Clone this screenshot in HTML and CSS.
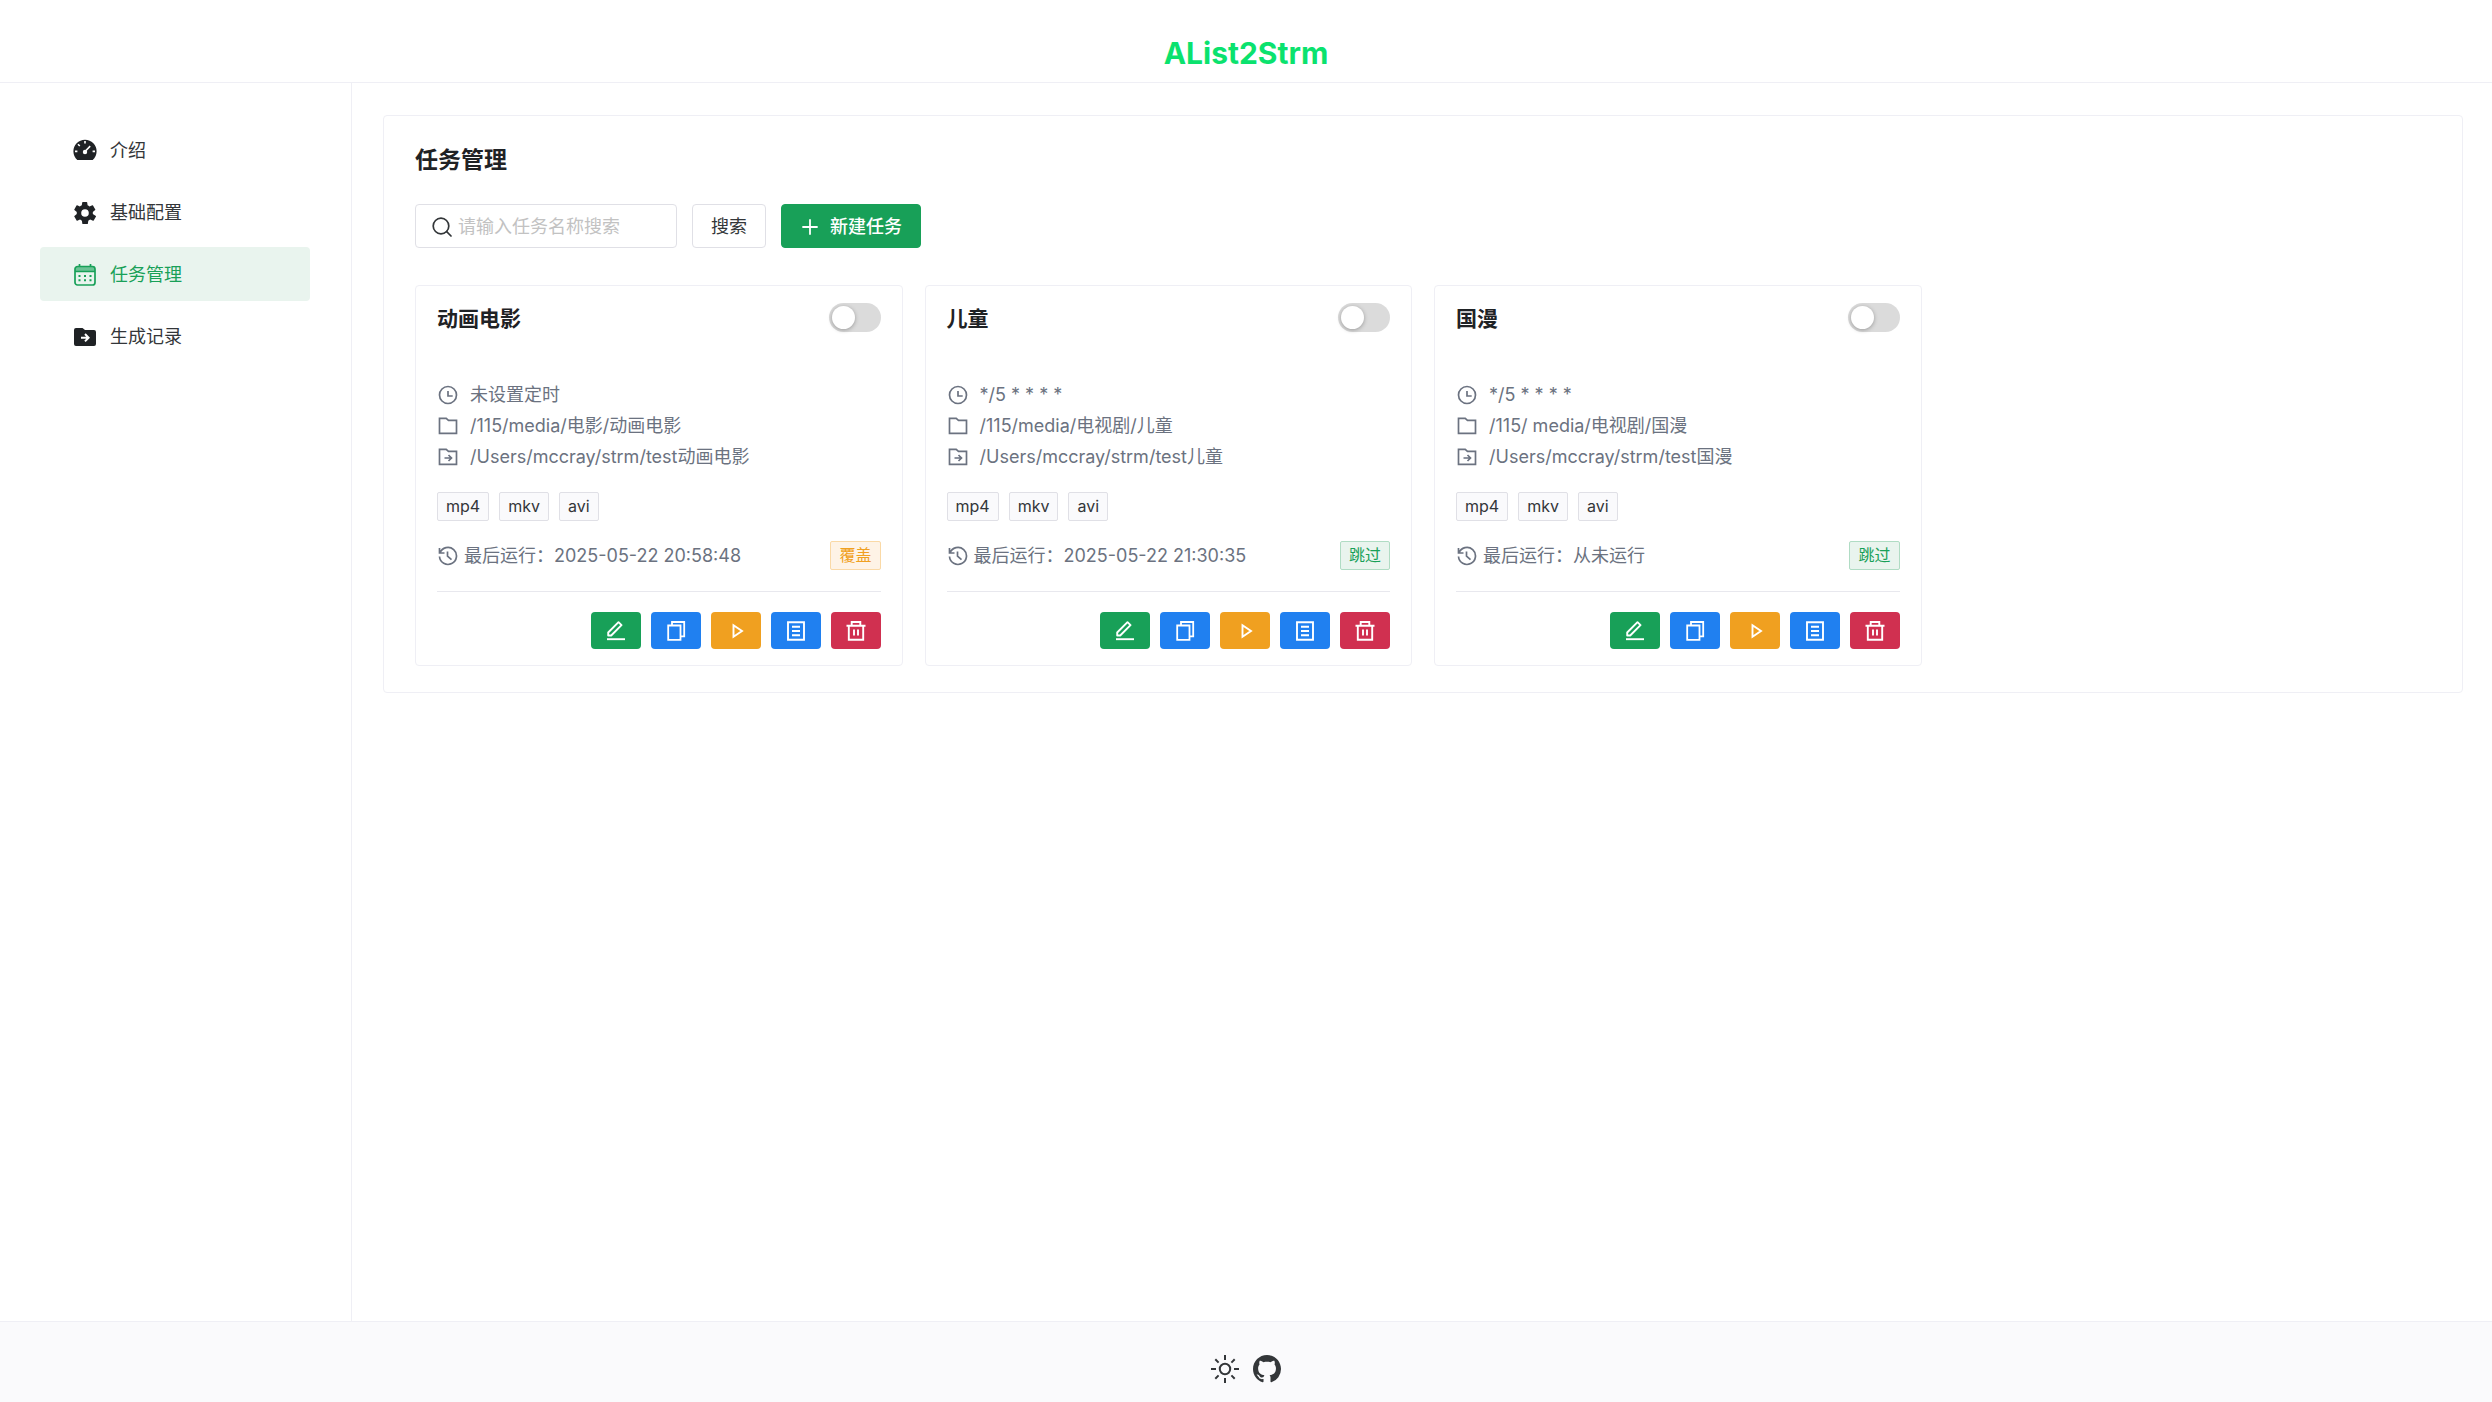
FILE: index.html
```html
<!DOCTYPE html>
<html lang="zh-CN">
<head>
<meta charset="utf-8">
<meta name="viewport" content="width=device-width, initial-scale=1">
<title>AList2Strm</title>
<link rel="stylesheet" href="styles.css">
</head>
<body>
<svg class="sprite" aria-hidden="true">
  <symbol id="i-gauge" viewBox="0 0 24 24"><path fill="currentColor" d="M4.3 21A11.6 11.6 0 1 1 19.7 21z"/><g stroke="#fff" fill="none" stroke-width="1.6"><path d="M12 2v2.6M2 12.4h2.4M19.6 12.4H22M5 5.2l1.8 1.8M12 12.5l5.2-5.4"/></g><circle cx="12" cy="13" r="2.2" fill="#fff"/></symbol>
  <symbol id="i-gear" viewBox="0 0 24 24"><path fill="currentColor" d="M19.8 13.1a8 8 0 0 0 0-2.2l2.4-1.8a.6.6 0 0 0 .1-.7l-2.3-3.9a.6.6 0 0 0-.7-.3l-2.8 1.2a8 8 0 0 0-1.9-1.1l-.4-2.9a.6.6 0 0 0-.6-.5H9.800a.6.6 0 0 0-.6.5l-.4 2.900a8 8 0 0 0-1.900 1.100L4.200 4.200a.6.6 0 0 0-.7.300L1.300 8.400a.6.6 0 0 0 .1.700l2.400 1.800a8 8 0 0 0 0 2.200l-2.400 1.800a.6.6 0 0 0-.1.700l2.300 3.900a.6.6 0 0 0 .7.300l2.700-1.200a8 8 0 0 0 1.900 1.100l.4 2.900a.6.6 0 0 0 .6.500h4.400a.6.6 0 0 0 .6-.5l.4-2.900a8 8 0 0 0 1.900-1.100l2.800 1.200a.6.6 0 0 0 .7-.300l2.300-3.900a.6.6 0 0 0-.1-.700zM12 15.800a3.800 3.800 0 1 1 0-7.600 3.800 3.800 0 0 1 0 7.600z"/></symbol>
  <symbol id="i-calendar" viewBox="0 0 24 24"><g fill="none" stroke="currentColor" stroke-width="1.700"><rect x="2" y="3.500" width="20" height="18.500" rx="2.500"/><path d="M6.500 1v3M17.500 1v3M2 8.500h20"/></g><path fill="currentColor" opacity=".6" d="M2 4h20v4H2z"/><path fill="currentColor" d="M5.500 12h2v2h-2zM11 12h2v2h-2zM16.500 12h2v2h-2zM5.500 16.200h2v2h-2zM11 16.200h2v2h-2zM16.500 16.200h2v2h-2z"/></symbol>
  <symbol id="i-folder-fill" viewBox="0 0 24 24"><path fill="currentColor" d="M3 3h6.500l2.500 2h9a2 2 0 0 1 2 2v12a2 2 0 0 1-2 2H3a2 2 0 0 1-2-2V5a2 2 0 0 1 2-2z"/><path stroke="#fff" stroke-width="2" fill="none" d="M8 12.700h7M12 9l3.600 3.700L12 16.400"/></symbol>
  <symbol id="i-search" viewBox="0 0 20 20"><g fill="none" stroke="currentColor" stroke-width="1.700" stroke-linecap="round"><circle cx="9" cy="9" r="7.800"/><path d="M14.700 14.700 19 19"/></g></symbol>
  <symbol id="i-plus" viewBox="0 0 20 20"><path stroke="currentColor" stroke-width="1.800" stroke-linecap="round" d="M10 3v14M3 10h14"/></symbol>
  <symbol id="i-clock" viewBox="0 0 20 20"><g fill="none" stroke="currentColor" stroke-width="1.700"><circle cx="10" cy="10" r="8.500"/><path d="M10 6v5h4.700"/></g></symbol>
  <symbol id="i-folder" viewBox="0 0 20 20"><path fill="none" stroke="currentColor" stroke-width="1.700" d="M1.500 2.300h6.700l2.300 2h8v13h-17z"/></symbol>
  <symbol id="i-folder-move" viewBox="0 0 20 20"><path fill="none" stroke="currentColor" stroke-width="1.700" d="M1.500 2.300h6.700l2.300 2h8v13h-17zM6.500 11h6.500M10.500 8l3 3-3 3"/></symbol>
  <symbol id="i-history" viewBox="0 0 20 20"><path fill="none" stroke="currentColor" stroke-width="1.700" d="M1.500 2v5h5M2 7a8.500 8.500 0 1 1-.5 3.500M9.500 5.500v4.700l4 3.500"/></symbol>
  <symbol id="i-edit" viewBox="0 0 20 20"><g fill="none" stroke="currentColor" stroke-width="1.900"><path d="M1 18.200h18"/><path stroke-linejoin="round" d="M2.200 14.500v-3L12.500 1.200l3 3L5.200 14.500z"/></g></symbol>
  <symbol id="i-copy" viewBox="0 0 20 20"><path fill="none" stroke="currentColor" stroke-width="1.800" d="M2.200 4.500h12.300v14.300H2.200zM6 4.500V1h12.200v14.300h-3.700"/></symbol>
  <symbol id="i-play" viewBox="0 0 20 20"><path fill="none" stroke="currentColor" stroke-width="1.900" d="M7.500 4.300 16 10l-8.500 5.700z"/></symbol>
  <symbol id="i-log" viewBox="0 0 20 20"><path fill="none" stroke="currentColor" stroke-width="1.900" d="M2 1.200h16v17.600H2zM6 5.700h8M6 10h8M6 14.300h8"/></symbol>
  <symbol id="i-trash" viewBox="0 0 20 20"><path fill="none" stroke="currentColor" stroke-width="1.900" d="M.5 4.700h19M5.700 4.500V1h8.600v3.500M2.800 4.700v14h14.400v-14M8 8.500v6M12 8.500v6"/></symbol>
  <symbol id="i-sun" viewBox="0 0 28 28"><g fill="none" stroke="currentColor" stroke-width="2"><circle cx="14" cy="14" r="5.200"/><path d="M14 0v5M14 23v5M0 14h5M23 14h5M4.300 4.300l3.300 3.300M20.400 20.400l3.300 3.300M4.300 23.700l3.300-3.300M20.400 7.600l3.300-3.300"/></g></symbol>
  <symbol id="i-github" viewBox="0 0 16 16"><path fill="currentColor" d="M8 0C3.580 0 0 3.580 0 8c0 3.540 2.290 6.530 5.470 7.590.4.070.55-.17.55-.38 0-.19-.01-.82-.01-1.490-2.010.37-2.530-.49-2.690-.94-.09-.23-.48-.94-.82-1.130-.28-.15-.68-.52-.01-.53.63-.01 1.080.58 1.230.82.72 1.210 1.870.87 2.330.66.07-.52.28-.87.51-1.070-1.780-.2-3.640-.89-3.640-3.950 0-.87.31-1.590.82-2.150-.08-.2-.36-1.020.08-2.120 0 0 .67-.21 2.200.82.64-.18 1.320-.27 2-.27s1.360.09 2 .27c1.530-1.040 2.200-.82 2.200-.82.44 1.100.16 1.920.08 2.120.51.56.82 1.270.82 2.150 0 3.070-1.870 3.750-3.650 3.950.29.25.54.73.54 1.480 0 1.070-.01 1.930-.01 2.200 0 .21.15.46.55.38A8.010 8.010 0 0 0 16 8c0-4.420-3.580-8-8-8z"/></symbol>
</svg>

<header class="header"><h1 class="brand">AList2Strm</h1></header>

<div class="body">
  <nav class="sidebar">
    <a class="menu-item" href="#intro"><svg class="menu-icon"><use href="#i-gauge"/></svg>介绍</a>
    <a class="menu-item" href="#config"><svg class="menu-icon"><use href="#i-gear"/></svg>基础配置</a>
    <a class="menu-item active" href="#tasks" aria-current="page"><svg class="menu-icon"><use href="#i-calendar"/></svg>任务管理</a>
    <a class="menu-item" href="#records"><svg class="menu-icon"><use href="#i-folder-fill"/></svg>生成记录</a>
  </nav>

  <main class="content">
    <section class="panel">
      <h2 class="panel-title">任务管理</h2>
      <form class="toolbar">
        <label class="search"><svg class="icon"><use href="#i-search"/></svg><input type="text" placeholder="请输入任务名称搜索" aria-label="任务名称"></label>
        <button class="btn" type="button">搜索</button>
        <button class="btn primary" type="button"><svg class="icon"><use href="#i-plus"/></svg>新建任务</button>
      </form>

      <div class="grid">
        <article class="card">
          <div class="card-head"><h3 class="card-title">动画电影</h3><input class="switch" type="checkbox" role="switch" aria-label="启用动画电影"></div>
          <ul class="details">
            <li><svg class="icon"><use href="#i-clock"/></svg>未设置定时</li>
            <li><svg class="icon"><use href="#i-folder"/></svg>/115/media/电影/动画电影</li>
            <li><svg class="icon"><use href="#i-folder-move"/></svg>/Users/mccray/strm/test动画电影</li>
          </ul>
          <div class="tags"><span class="tag">mp4</span><span class="tag">mkv</span><span class="tag">avi</span></div>
          <div class="last-run"><svg class="icon"><use href="#i-history"/></svg><span>最后运行：2025-05-22 20:58:48</span><span class="tag warning">覆盖</span></div>
          <div class="actions">
            <button class="act green" type="button" aria-label="编辑"><svg class="icon"><use href="#i-edit"/></svg></button>
            <button class="act blue" type="button" aria-label="复制"><svg class="icon"><use href="#i-copy"/></svg></button>
            <button class="act orange" type="button" aria-label="运行"><svg class="icon"><use href="#i-play"/></svg></button>
            <button class="act blue" type="button" aria-label="日志"><svg class="icon"><use href="#i-log"/></svg></button>
            <button class="act red" type="button" aria-label="删除"><svg class="icon"><use href="#i-trash"/></svg></button>
          </div>
        </article>

        <article class="card">
          <div class="card-head"><h3 class="card-title">儿童</h3><input class="switch" type="checkbox" role="switch" aria-label="启用儿童"></div>
          <ul class="details">
            <li><svg class="icon"><use href="#i-clock"/></svg>*/5 * * * *</li>
            <li><svg class="icon"><use href="#i-folder"/></svg>/115/media/电视剧/儿童</li>
            <li><svg class="icon"><use href="#i-folder-move"/></svg>/Users/mccray/strm/test儿童</li>
          </ul>
          <div class="tags"><span class="tag">mp4</span><span class="tag">mkv</span><span class="tag">avi</span></div>
          <div class="last-run"><svg class="icon"><use href="#i-history"/></svg><span>最后运行：2025-05-22 21:30:35</span><span class="tag success">跳过</span></div>
          <div class="actions">
            <button class="act green" type="button" aria-label="编辑"><svg class="icon"><use href="#i-edit"/></svg></button>
            <button class="act blue" type="button" aria-label="复制"><svg class="icon"><use href="#i-copy"/></svg></button>
            <button class="act orange" type="button" aria-label="运行"><svg class="icon"><use href="#i-play"/></svg></button>
            <button class="act blue" type="button" aria-label="日志"><svg class="icon"><use href="#i-log"/></svg></button>
            <button class="act red" type="button" aria-label="删除"><svg class="icon"><use href="#i-trash"/></svg></button>
          </div>
        </article>

        <article class="card">
          <div class="card-head"><h3 class="card-title">国漫</h3><input class="switch" type="checkbox" role="switch" aria-label="启用国漫"></div>
          <ul class="details">
            <li><svg class="icon"><use href="#i-clock"/></svg>*/5 * * * *</li>
            <li><svg class="icon"><use href="#i-folder"/></svg>/115/ media/电视剧/国漫</li>
            <li><svg class="icon"><use href="#i-folder-move"/></svg>/Users/mccray/strm/test国漫</li>
          </ul>
          <div class="tags"><span class="tag">mp4</span><span class="tag">mkv</span><span class="tag">avi</span></div>
          <div class="last-run"><svg class="icon"><use href="#i-history"/></svg><span>最后运行：从未运行</span><span class="tag success">跳过</span></div>
          <div class="actions">
            <button class="act green" type="button" aria-label="编辑"><svg class="icon"><use href="#i-edit"/></svg></button>
            <button class="act blue" type="button" aria-label="复制"><svg class="icon"><use href="#i-copy"/></svg></button>
            <button class="act orange" type="button" aria-label="运行"><svg class="icon"><use href="#i-play"/></svg></button>
            <button class="act blue" type="button" aria-label="日志"><svg class="icon"><use href="#i-log"/></svg></button>
            <button class="act red" type="button" aria-label="删除"><svg class="icon"><use href="#i-trash"/></svg></button>
          </div>
        </article>
      </div>
    </section>
  </main>
</div>

<footer class="footer">
  <button class="foot-link" type="button" aria-label="切换主题"><svg class="foot-icon"><use href="#i-sun"/></svg></button>
  <a class="foot-link" href="#github" aria-label="GitHub"><svg class="foot-icon"><use href="#i-github"/></svg></a>
</footer>
</body>
</html>
```
FILE: styles.css
```css
* { box-sizing: border-box; }

body {
  margin: 0;
  min-height: 100vh;
  display: flex;
  flex-direction: column;
  background: #fff;
  color: #333639;
  font: 18px/28px Inter, "Noto Sans CJK SC", sans-serif;
}

h1, h2, h3, ul { margin: 0; padding: 0; }
ul { list-style: none; }
button, input { font: inherit; color: inherit; }
button { border: 0; padding: 0; cursor: pointer; }
svg { display: block; flex: none; }
.sprite { display: none; }
.icon { width: 20px; height: 20px; }

.header {
  border-bottom: 1px solid #efeff5;
  padding: 33px 0 9px;
  text-align: center;
}
.brand { color: #0be26e; font-size: 30px; line-height: 40px; font-weight: 700; }

.body { flex: 1; display: flex; }

.sidebar {
  flex: none;
  width: 352px;
  padding: 40px;
  border-right: 1px solid #efeff5;
  display: flex;
  flex-direction: column;
  gap: 8px;
}
.menu-item {
  height: 54px;
  width: 270px;
  padding: 2px 0 0 33px;
  display: flex;
  align-items: center;
  gap: 13px;
  border-radius: 4px;
  color: #333639;
  text-decoration: none;
}
.menu-icon { width: 24px; height: 24px; color: #1f2225; }
.menu-item.active { background: #e9f4ee; color: #18a058; }
.active .menu-icon { color: #18a058; }

.content { flex: 1; min-width: 0; padding: 32px 29px 32px 31px; }
.panel {
  border: 1px solid #efeff5;
  border-radius: 4px;
  padding: 26px 31px;
}
.panel-title { color: #1f2225; font-size: 23px; line-height: 36px; font-weight: 600; }

.toolbar { display: flex; gap: 15px; margin: 26px 0 37px; }
.search {
  width: 262px;
  height: 44px;
  padding: 1px 16px 0;
  display: flex;
  align-items: center;
  gap: 6px;
  border: 1px solid #e0e0e6;
  border-radius: 4px;
}
.search input { flex: 1; min-width: 0; border: 0; outline: 0; padding: 0; background: none; }
.search input::placeholder { color: #c2c2c2; opacity: 1; }
.btn {
  height: 44px;
  padding: 2px 18px 0;
  border: 1px solid #e0e0e6;
  border-radius: 4px;
  background: #fff;
}
.btn.primary {
  padding: 1px 18px 0;
  display: flex;
  align-items: center;
  gap: 10px;
  border-color: #18a058;
  background: #18a058;
  color: #fff;
  font-weight: 500;
}

.grid { display: grid; grid-template-columns: repeat(4, 1fr); gap: 22px; }
.card { border: 1px solid #efeff5; border-radius: 4px; padding: 16px 21px; }
.card-head { display: flex; justify-content: space-between; height: 34px; }
.card-title { color: #1f2225; font-size: 21px; line-height: 34px; font-weight: 600; }

.switch {
  appearance: none;
  width: 52px;
  height: 29px;
  margin: 1px 0 0;
  padding: 3px;
  border-radius: 15px;
  background: #dbdbdb;
}
.switch::before {
  content: "";
  display: block;
  width: 23px;
  height: 23px;
  border-radius: 50%;
  background: #fff;
  box-shadow: 0 1px 4px rgba(0, 0, 0, .3);
}

.details { margin-top: 43px; color: #6b7280; }
.details li { display: flex; align-items: center; gap: 12px; height: 31px; padding-left: 1px; }

.tags { display: flex; gap: 10px; margin-top: 20px; }
.tag {
  height: 29px;
  padding: 0 8px;
  border: 1px solid #e0e0e6;
  border-radius: 2px;
  background: #fafafc;
  color: #333639;
  font-size: 16px;
  line-height: 27px;
}
.tag.warning { background: #fef3e6; border-color: #fad9a6; color: #f0a020; }
.tag.success { background: #e9f4ee; border-color: #b0dcc4; color: #18a058; }

.last-run {
  display: flex;
  align-items: center;
  gap: 6px;
  margin-top: 20px;
  padding: 0 0 21px 1px;
  border-bottom: 1px solid #e8e8ee;
  color: #6b7280;
}
.last-run .tag { margin-left: auto; }

.actions { display: flex; justify-content: flex-end; gap: 10px; margin-top: 20px; }
.act {
  width: 50px;
  height: 37px;
  display: grid;
  place-items: center;
  border-radius: 4px;
  color: #fff;
}
.green { background: #18a058; }
.blue { background: #2080f0; }
.orange { background: #f0a020; }
.red { background: #d03050; }

.footer {
  height: 81px;
  border-top: 1px solid #efeff5;
  padding-top: 14px;
  display: flex;
  align-items: center;
  justify-content: center;
  gap: 14px;
  background: #fafafc;
}
.foot-link { background: none; color: #333639; }
.foot-icon { width: 28px; height: 28px; }
```
